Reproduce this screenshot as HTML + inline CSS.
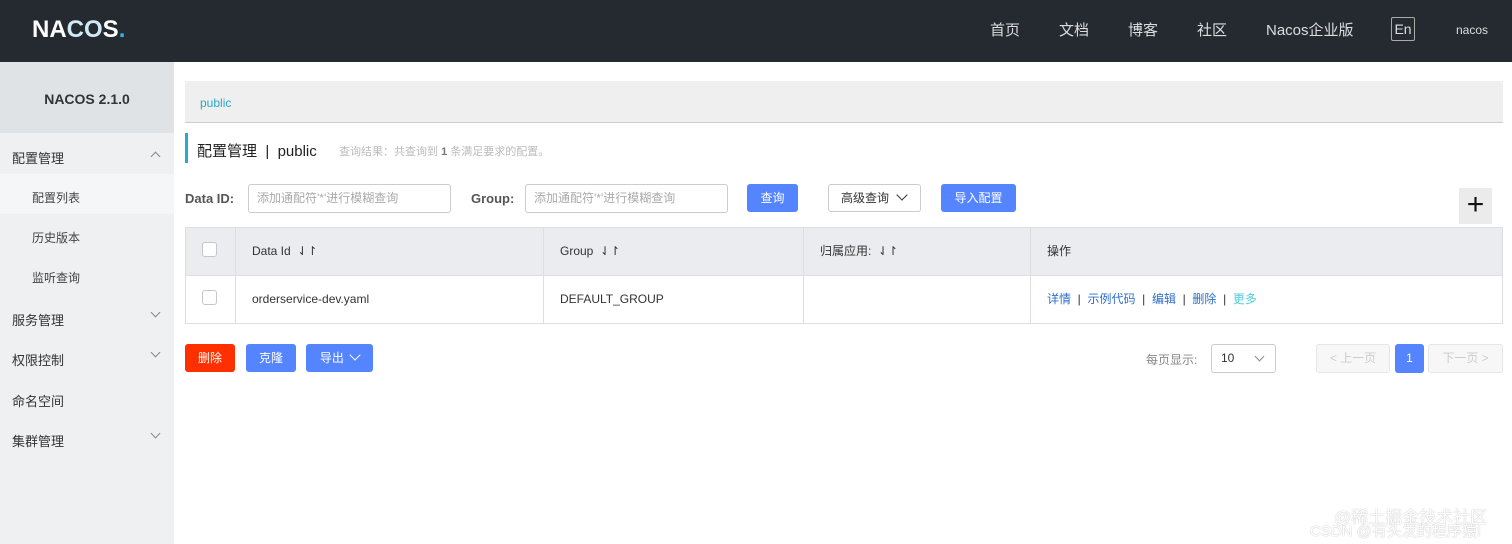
<!DOCTYPE html>
<html><head><meta charset="utf-8"><style>
*{box-sizing:border-box;margin:0;padding:0}
body{width:1512px;height:544px;overflow:hidden;font-family:"Liberation Sans","Noto Sans CJK SC",sans-serif;font-size:12px;color:#333;background:#fff;position:relative}
.a{position:absolute}
.hdr{left:0;top:0;width:1512px;height:62px;background:#252a31}
.nav{color:#ddd;font-size:15px;top:19px}
.side{left:0;top:62px;width:174px;height:482px;background:#eef0f2}
.ver{left:0;top:62px;width:174px;height:71px;background:#dfe3e6;font-weight:bold;font-size:14px;color:#333;text-align:center;line-height:74px}
.mi{left:12px;font-size:13px;color:#333}
.si{left:32px;font-size:12px;color:#444}
.chev{left:152px;width:7px;height:7px;border-right:1px solid #888;border-bottom:1px solid #888;transform:rotate(45deg)}
.inp{height:29px;border:1px solid #ccc;border-radius:3px;color:#aaa;padding-left:8px;line-height:27px}
.btn{height:28px;border-radius:3px;background:#5584ff;color:#fff;text-align:center;line-height:28px}
.th{top:227px;height:48px;background:#ebecf0;border-top:1px solid #dcdee3}
.cell{position:absolute;line-height:48px}
.vl{position:absolute;width:1px;background:#dcdee3}
.cb{position:absolute;width:15px;height:15px;border:1px solid #c4c6cf;border-radius:3px;background:#fff;left:202px}
.lk{color:#2f6fc8}
</style></head><body>
<div class="a hdr"></div>
<div class="a" style="left:32px;top:16px;color:#fff;font-size:24px;font-weight:bold">NA<span style="color:#cfe9f5">CO</span>S<span style="color:#27b9e0">.</span></div>
<div class="a nav" style="left:990px">首页</div>
<div class="a nav" style="left:1059px">文档</div>
<div class="a nav" style="left:1128px">博客</div>
<div class="a nav" style="left:1197px">社区</div>
<div class="a nav" style="left:1266px">Nacos企业版</div>
<div class="a" style="left:1391px;top:17px;width:24px;height:24px;border:1px solid #aaa;border-radius:2px;color:#ddd;font-size:14px;text-align:center;line-height:22px">En</div>
<div class="a" style="left:1456px;top:23px;color:#ddd;font-size:12px">nacos</div>

<div class="a side"></div>
<div class="a ver">NACOS 2.1.0</div>
<div class="a" style="left:0;top:174px;width:174px;height:40px;background:#f5f6f7"></div>
<div class="a mi" style="top:148px">配置管理</div><div class="a chev" style="top:153px;transform:rotate(225deg)"></div>
<div class="a si" style="top:189px">配置列表</div>
<div class="a si" style="top:229px">历史版本</div>
<div class="a si" style="top:269px">监听查询</div>
<div class="a mi" style="top:310px">服务管理</div><div class="a chev" style="top:309px"></div>
<div class="a mi" style="top:350px">权限控制</div><div class="a chev" style="top:349px"></div>
<div class="a mi" style="top:391px">命名空间</div>
<div class="a mi" style="top:431px">集群管理</div><div class="a chev" style="top:430px"></div>

<div class="a" style="left:185px;top:81px;width:1318px;height:42px;background:#efefef;border-bottom:1px solid #ccc"></div>
<div class="a" style="left:200px;top:96px;color:#27a9c8">public</div>
<div class="a" style="left:185px;top:133px;width:3px;height:30px;background:#27a9c8"></div>
<div class="a" style="left:197px;top:140px;font-size:15px;color:#222">配置管理 &nbsp;| &nbsp;public</div>
<div class="a" style="left:339px;top:143px;font-size:11px;color:#bbb">查询结果：共查询到 <b style="color:#777">1</b> 条满足要求的配置。</div>

<div class="a" style="left:185px;top:191px;font-weight:bold;color:#555;font-size:13px">Data ID:</div>
<div class="a inp" style="left:248px;top:184px;width:203px">添加通配符'*'进行模糊查询</div>
<div class="a" style="left:471px;top:191px;font-weight:bold;color:#555;font-size:13px">Group:</div>
<div class="a inp" style="left:525px;top:184px;width:203px">添加通配符'*'进行模糊查询</div>
<div class="a btn" style="left:747px;top:184px;width:51px">查询</div>
<div class="a" style="left:828px;top:184px;width:93px;height:28px;border:1px solid #ccc;border-radius:3px;color:#333;line-height:26px;padding-left:12px">高级查询 <span style="display:inline-block;width:8px;height:8px;border-right:1px solid #333;border-bottom:1px solid #333;transform:rotate(45deg);margin:0 0 3px 6px"></span></div>
<div class="a btn" style="left:941px;top:184px;width:75px">导入配置</div>
<div class="a" style="left:1459px;top:188px;width:33px;height:36px;background:#ebebeb;text-align:center;font-size:30px;line-height:34px;color:#111;font-weight:300">+</div>

<div class="a" style="left:185px;top:227px;width:1318px;height:97px;border:1px solid #dcdee3"></div>
<div class="a th" style="left:186px;width:1316px"></div>
<div class="vl" style="left:235px;top:227px;height:96px"></div>
<div class="vl" style="left:543px;top:227px;height:96px"></div>
<div class="vl" style="left:803px;top:227px;height:96px"></div>
<div class="vl" style="left:1030px;top:227px;height:96px"></div>
<div class="a" style="left:186px;top:275px;width:1316px;height:1px;background:#dcdee3"></div>
<div class="cb" style="top:242px"></div>
<div class="cb" style="top:290px"></div>
<div class="cell" style="left:252px;top:227px">Data Id &nbsp;⇃↾</div>
<div class="cell" style="left:560px;top:227px">Group &nbsp;⇃↾</div>
<div class="cell" style="left:820px;top:227px">归属应用: &nbsp;⇃↾</div>
<div class="cell" style="left:1047px;top:227px">操作</div>
<div class="cell" style="left:252px;top:275px">orderservice-dev.yaml</div>
<div class="cell" style="left:560px;top:275px">DEFAULT_GROUP</div>
<div class="cell" style="left:1047px;top:275px"><span class="lk">详情</span> &nbsp;|&nbsp; <span class="lk">示例代码</span> &nbsp;|&nbsp; <span class="lk">编辑</span> &nbsp;|&nbsp; <span class="lk">删除</span> &nbsp;|&nbsp; <span style="color:#4ccfe0">更多</span></div>

<div class="a btn" style="left:185px;top:344px;width:50px;background:#ff3000">删除</div>
<div class="a btn" style="left:246px;top:344px;width:50px">克隆</div>
<div class="a btn" style="left:306px;top:344px;width:67px">导出 <span style="display:inline-block;width:8px;height:8px;border-right:1px solid #fff;border-bottom:1px solid #fff;transform:rotate(45deg);margin:0 0 3px 4px"></span></div>

<div class="a" style="left:1146px;top:351px;color:#888">每页显示:</div>
<div class="a" style="left:1211px;top:344px;width:65px;height:29px;border:1px solid #ccc;border-radius:3px;line-height:27px;padding-left:9px;color:#333">10<span style="position:absolute;left:44px;top:8px;width:7px;height:7px;border-right:1px solid #888;border-bottom:1px solid #888;transform:rotate(45deg)"></span></div>
<div class="a" style="left:1316px;top:344px;width:74px;height:29px;border:1px solid #e6e6e6;border-radius:3px;background:#f7f7f7;color:#ccc;text-align:center;line-height:27px">&lt; 上一页</div>
<div class="a btn" style="left:1395px;top:344px;width:29px;height:29px;line-height:29px">1</div>
<div class="a" style="left:1428px;top:344px;width:75px;height:29px;border:1px solid #e6e6e6;border-radius:3px;background:#f7f7f7;color:#ccc;text-align:center;line-height:27px">下一页 &gt;</div>

<div class="a" style="left:1334px;top:503px;font-size:17px;color:#fff;text-shadow:0 0 1px #999">@稀土掘金技术社区</div>
<div class="a" style="left:1310px;top:520px;font-size:15px;color:#fff;text-shadow:0 0 1px #999">CSDN @有头发的程序猿!</div>
</body></html>
